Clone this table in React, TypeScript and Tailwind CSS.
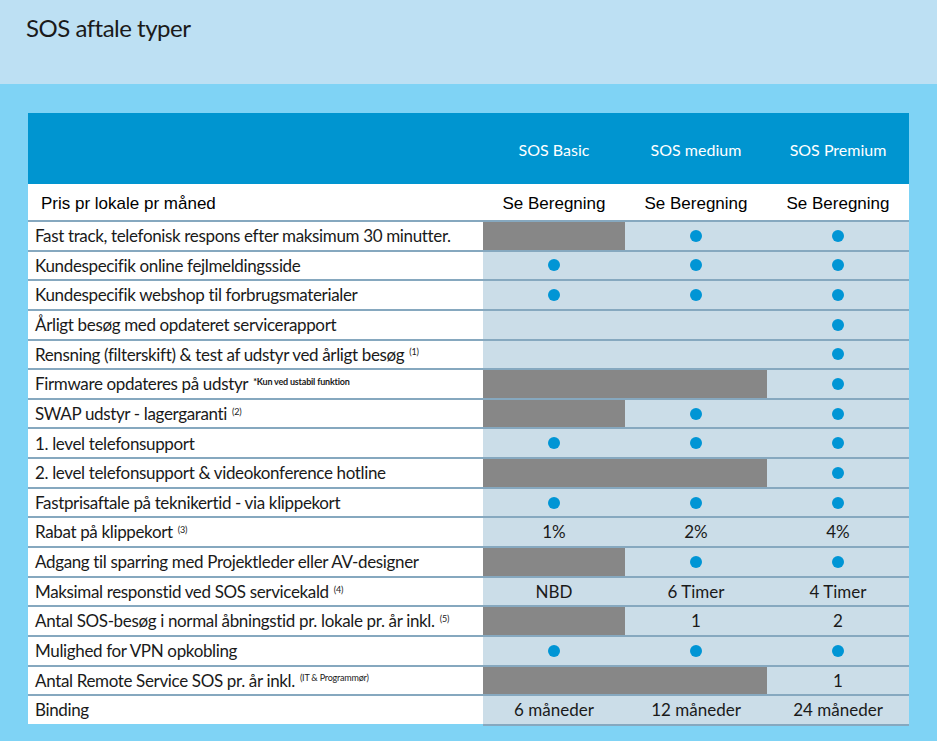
type Cell = 'dot' | 'grey' | '' | string;

const rows: { label: string; note?: string; noteBold?: boolean; cells: Cell[] }[] = [
  { label: 'Fast track, telefonisk respons efter maksimum 30 minutter.', cells: ['grey', 'dot', 'dot'] },
  { label: 'Kundespecifik online fejlmeldingsside', cells: ['dot', 'dot', 'dot'] },
  { label: 'Kundespecifik webshop til forbrugsmaterialer', cells: ['dot', 'dot', 'dot'] },
  { label: 'Årligt besøg med opdateret servicerapport', cells: ['', '', 'dot'] },
  { label: 'Rensning (filterskift) & test af udstyr ved årligt besøg', note: '(1)', cells: ['', '', 'dot'] },
  { label: 'Firmware opdateres på udstyr', note: '*Kun ved ustabil funktion', noteBold: true, cells: ['grey', 'grey', 'dot'] },
  { label: 'SWAP udstyr - lagergaranti', note: '(2)', cells: ['grey', 'dot', 'dot'] },
  { label: '1. level telefonsupport', cells: ['dot', 'dot', 'dot'] },
  { label: '2. level telefonsupport & videokonference hotline', cells: ['grey', 'grey', 'dot'] },
  { label: 'Fastprisaftale på teknikertid - via klippekort', cells: ['dot', 'dot', 'dot'] },
  { label: 'Rabat på klippekort', note: '(3)', cells: ['1%', '2%', '4%'] },
  { label: 'Adgang til sparring med Projektleder eller AV-designer', cells: ['grey', 'dot', 'dot'] },
  { label: 'Maksimal responstid ved SOS servicekald', note: '(4)', cells: ['NBD', '6 Timer', '4 Timer'] },
  { label: 'Antal SOS-besøg i normal åbningstid pr. lokale pr. år inkl.', note: '(5)', cells: ['grey', '1', '2'] },
  { label: 'Mulighed for VPN opkobling', cells: ['dot', 'dot', 'dot'] },
  { label: 'Antal Remote Service SOS pr. år inkl.', note: '(IT & Programmør)', cells: ['grey', 'grey', '1'] },
  { label: 'Binding', cells: ['6 måneder', '12 måneder', '24 måneder'] },
];

const plans = ['SOS Basic', 'SOS medium', 'SOS Premium'];

const App = () => {
  return (
    <div className="w-[937px] h-[741px] bg-[#7fd3f5] font-['Lato',sans-serif] text-[#1a1a1a] overflow-hidden">
      <div className="h-[84px] bg-[#bde0f3] pl-[26px] pt-[13px]">
        <h1 className="text-[24px] leading-[30px] tracking-[-0.5px]">SOS aftale typer</h1>
      </div>

      <div className="ml-[28px] mt-[29px] w-[881px]">
        {/* header */}
        <div className="grid grid-cols-[455px_142px_142px_142px] h-[71px] bg-[#0095d0] text-white text-[16px]">
          <div />
          {plans.map((p) => (
            <div key={p} className="flex items-center justify-center pt-[3px]">
              {p}
            </div>
          ))}
        </div>

        {/* price row */}
        <div className="grid grid-cols-[455px_142px_142px_142px] h-[36px] bg-white font-['Liberation_Sans',Arial,sans-serif] text-[17px] text-black">
          <div className="flex items-center pl-[13px] pt-[3px]">Pris pr lokale pr måned</div>
          {plans.map((p) => (
            <div key={p} className="flex items-center justify-center pt-[3px]">
              Se Beregning
            </div>
          ))}
        </div>

        {rows.map((r) => (
          <div
            key={r.label}
            className="grid grid-cols-[455px_142px_142px_142px] h-[29.65px] border-t-2 border-[#86a8bf] text-[17px]"
          >
            <div className="flex items-center bg-white pl-[7px] whitespace-nowrap tracking-[-0.35px]">
              {r.label}
              {r.note && (
                <sup
                  className={`ml-[5px] text-[9px] -top-[2px] tracking-[-0.2px] ${r.noteBold ? 'font-bold' : ''}`}
                >
                  {r.note}
                </sup>
              )}
            </div>
            {r.cells.map((c, i) => (
              <div
                key={i}
                className={`flex items-center justify-center ${c === 'grey' ? 'bg-[#878787]' : 'bg-[#cbdde8]'}`}
              >
                {c === 'dot' ? (
                  <span className="w-3 h-3 rounded-full bg-[#0095d5]" />
                ) : c === 'grey' ? null : (
                  c
                )}
              </div>
            ))}
          </div>
        ))}
        <div className="grid grid-cols-[455px_426px]">
          <div />
          <div className="h-[2px] bg-[#86a8bf]" />
        </div>
      </div>
    </div>
  );
};

export default App;
